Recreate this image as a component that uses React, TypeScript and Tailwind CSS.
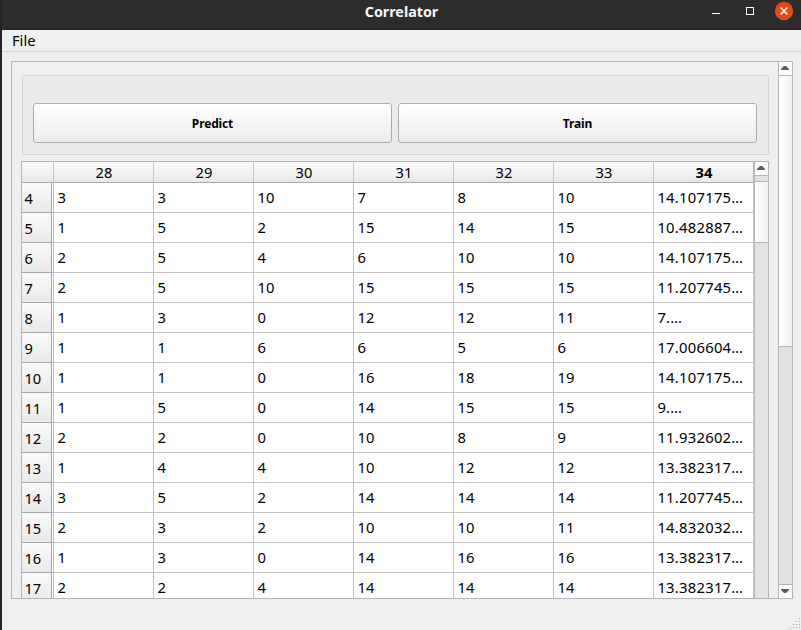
const columns = ["28", "29", "30", "31", "32", "33", "34"];

const rows: { id: number; cells: string[] }[] = [
  { id: 4, cells: ["3", "3", "10", "7", "8", "10", "14.107175…"] },
  { id: 5, cells: ["1", "5", "2", "15", "14", "15", "10.482887…"] },
  { id: 6, cells: ["2", "5", "4", "6", "10", "10", "14.107175…"] },
  { id: 7, cells: ["2", "5", "10", "15", "15", "15", "11.207745…"] },
  { id: 8, cells: ["1", "3", "0", "12", "12", "11", "7.…"] },
  { id: 9, cells: ["1", "1", "6", "6", "5", "6", "17.006604…"] },
  { id: 10, cells: ["1", "1", "0", "16", "18", "19", "14.107175…"] },
  { id: 11, cells: ["1", "5", "0", "14", "15", "15", "9.…"] },
  { id: 12, cells: ["2", "2", "0", "10", "8", "9", "11.932602…"] },
  { id: 13, cells: ["1", "4", "4", "10", "12", "12", "13.382317…"] },
  { id: 14, cells: ["3", "5", "2", "14", "14", "14", "11.207745…"] },
  { id: 15, cells: ["2", "3", "2", "10", "10", "11", "14.832032…"] },
  { id: 16, cells: ["1", "3", "0", "14", "16", "16", "13.382317…"] },
  { id: 17, cells: ["2", "2", "4", "14", "14", "14", "13.382317…"] },
];

function TitleBar() {
  return (
    <header className="flex h-[30px] shrink-0 items-start border-b border-[#222222] bg-[#2c2c2c] text-[#f7f7f7]">
      <div className="w-[100px]" />
      <h1 className="grow pt-[2px] text-center text-[14.3px] leading-5 font-bold">Correlator</h1>
      <svg className="h-[29px] w-[100px]" viewBox="0 0 100 29" fill="none">
        <path d="M11 13.5h8" stroke="#fff" strokeWidth="1" />
        <rect x="45.5" y="7.5" width="7" height="7" stroke="#fff" />
        <circle cx="83" cy="11" r="9.2" fill="#e04a17" />
        <path d="M79.6 7.6l6.8 6.8M86.4 7.6l-6.8 6.8" stroke="#fff" strokeWidth="1.4" />
      </svg>
    </header>
  );
}

function Arrow({ down = false }: { down?: boolean }) {
  return (
    <svg className="h-[13px] w-3 shrink-0" viewBox="0 0 12 13" fill="#5a5a5a">
      <path d={down ? "M2 4h8v1l-3 3h-2l-3-3z" : "M2 8h8v-1l-3-3h-2l-3 3z"} />
    </svg>
  );
}

function PushButton({ label }: { label: string }) {
  return (
    <button className="h-10 flex-1 rounded-[3px] border border-[#ababab] bg-linear-to-b from-white to-[#ececec] pt-[2px] text-[12px] font-bold tracking-[-0.15px]">
      {label}
    </button>
  );
}

function DataTable() {
  return (
    <div className="mt-[6px] ml-[9px] flex h-[437px] w-[748px] border-t border-l border-[#b4b4b4]">
      <div className="w-[732px] shrink-0">
        <div className="flex h-[21px] border-b border-[#a8a8a8] bg-linear-to-b from-[#fbfbfb] to-[#e8e8e8]">
          <div className="w-8 shrink-0 border-r border-[#c6c6c6]" />
          {columns.map((name) => (
            <div
              key={name}
              className={
                name === "34"
                  ? "w-[100px] shrink-0 border-r border-[#b8b8b8] pl-px text-center text-[14.7px] leading-[21px] font-bold"
                  : "w-[100px] shrink-0 border-r border-[#c6c6c6] pl-px text-center text-[14.7px] leading-[21px]"
              }
            >
              {name}
            </div>
          ))}
        </div>
        <div className="h-[415px] overflow-hidden">
          {rows.map((row) => (
            <div key={row.id} className="flex h-[30px] bg-white">
              <div className="w-[30px] shrink-0 border-r border-b border-[#a8a8a8] bg-linear-to-b from-[#fafafa] to-[#e9e9e9] pl-[2.4px] text-[14.7px] leading-[31px]">
                {row.id}
              </div>
              <div className="w-[2px] shrink-0 border-r border-b border-[#c2c2c2]" />
              {row.cells.map((cell, i) => (
                <div
                  key={i}
                  className="w-[100px] shrink-0 border-r border-b border-[#c2c2c2] pl-[3.4px] text-[14.8px] leading-[28px] tracking-[0.25px] whitespace-nowrap"
                >
                  {cell}
                </div>
              ))}
            </div>
          ))}
        </div>
      </div>
      <div className="flex w-[15px] shrink-0 flex-col border-x border-r-[#b4b4b4] border-l-[#b8b8b8] bg-[#e3e3e3]">
        <div className="flex h-[14px] shrink-0 border-b border-[#b4b4b4] bg-[#fafafa]">
          <Arrow />
        </div>
        <div className="h-[5px] shrink-0" />
        <div className="h-[62px] shrink-0 border-y border-[#b4b4b4] bg-linear-to-r from-white to-[#f0f0f0]" />
      </div>
    </div>
  );
}

export default function App() {
  return (
    <div className="flex h-[630px] w-[801px] flex-col overflow-hidden border-l-2 border-[#242424] bg-[#efefef] font-['Noto_Sans','Open_Sans',sans-serif] text-black">
      <TitleBar />
      <nav className="h-[22px] shrink-0 border-b border-[#d3d3d3] pl-[10px] text-[14.7px] leading-[20px]">File</nav>
      <main className="mt-[9px] ml-[9px] flex h-[538px] w-[782px] shrink-0 border border-[#b4b4b4]">
        <div className="w-[766px] shrink-0">
          <section className="mt-[13px] ml-[10px] flex h-20 w-[747px] gap-[6px] rounded-[2px] border border-[#d5d5d5] bg-[#ebebeb] pt-[27px] pr-[11px] pl-[10px]">
            <PushButton label="Predict" />
            <PushButton label="Train" />
          </section>
          <DataTable />
        </div>
        <div className="flex w-[14px] shrink-0 flex-col border-l border-[#b4b4b4] bg-[#e0e0e0]">
          <div className="flex h-[14px] shrink-0 border-b border-[#b4b4b4] bg-[#fafafa]">
            <Arrow />
          </div>
          <div className="h-[271px] shrink-0 border-b border-[#b4b4b4] bg-linear-to-r from-white to-[#f0f0f0]" />
          <div className="grow" />
          <div className="flex h-[14px] shrink-0 border-t border-[#b4b4b4] bg-[#fafafa]">
            <Arrow down />
          </div>
        </div>
      </main>
      <footer className="flex grow items-end justify-end">
        <svg className="h-3 w-3" viewBox="0 0 12 12" fill="#b4b4b4">
          <path d="M10 0h1v1h-1zM7 3h1v1h-1zM10 3h1v1h-1zM4 6h1v1h-1zM7 6h1v1h-1zM10 6h1v1h-1zM1 9h1v1h-1zM4 9h1v1h-1zM7 9h1v1h-1zM10 9h1v1h-1z" />
        </svg>
      </footer>
    </div>
  );
}
